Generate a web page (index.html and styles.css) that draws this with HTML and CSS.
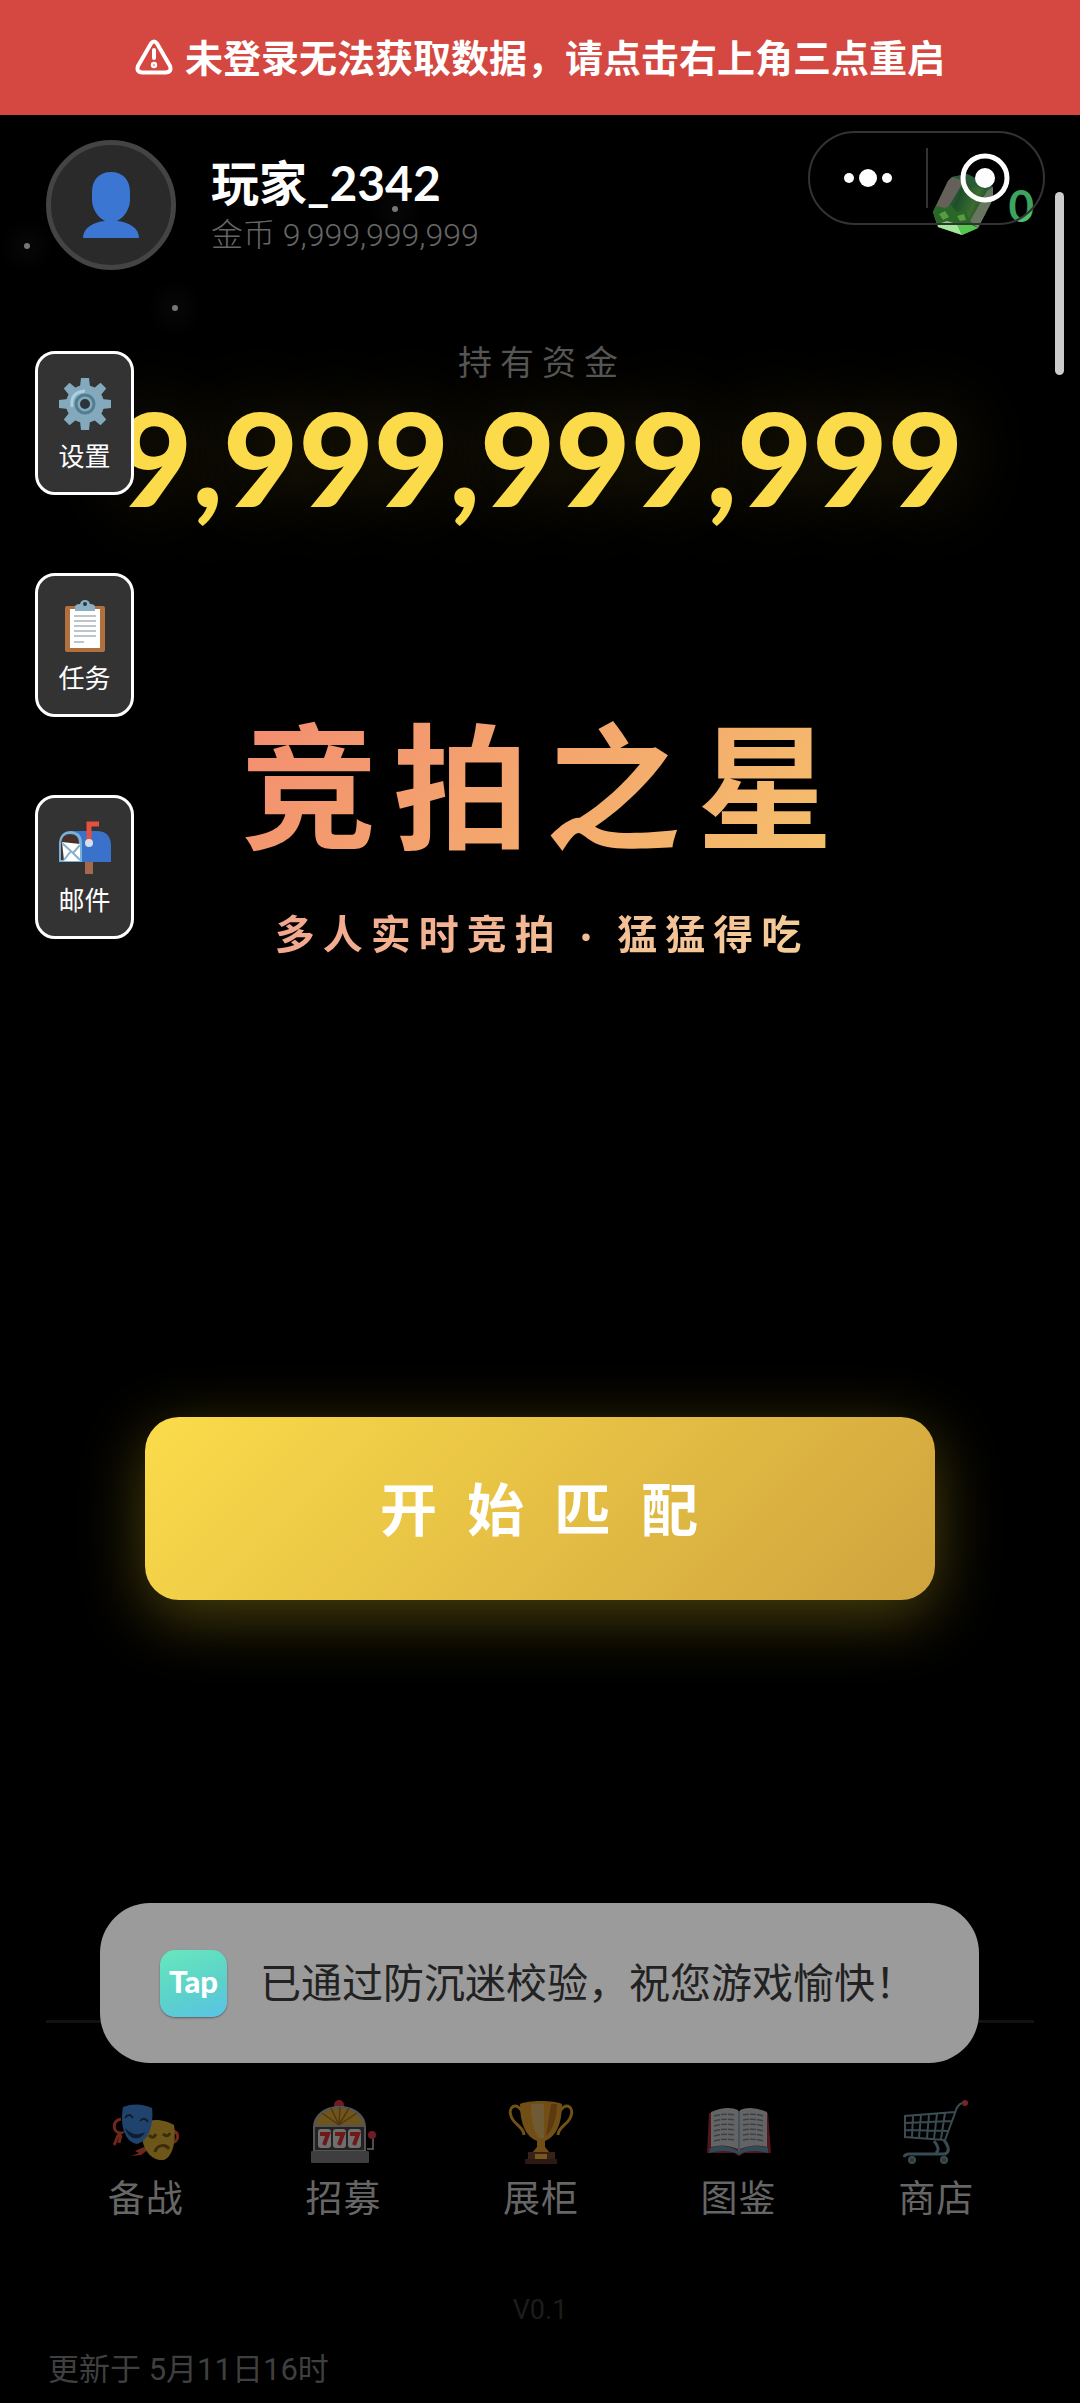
FILE: index.html
```html
<!DOCTYPE html>
<html lang="zh-CN">
<head>
    <meta charset="UTF-8">
    <meta name="viewport" content="width=device-width, initial-scale=1.0">
    <title>竞拍之星</title>
    <link rel="stylesheet" href="styles.css">
</head>
<body>
    <div class="page">
        <div class="banner" role="alert">
            <svg class="banner-icon" viewBox="0 0 38 36" fill="none" stroke="#fff" stroke-width="4" stroke-linejoin="round" stroke-linecap="round">
                <path d="M16 4.500 Q19 0.500 22 4.500 L35 27 Q37 33 31 33.500 H7 Q1 33 3 27 Z"/>
                <path d="M19 11 V19"/>
                <circle cx="19" cy="26" r="1.200"/>
            </svg>
            <span>未登录无法获取数据，请点击右上角三点重启</span>
        </div>

        <header class="header">
            <div class="avatar">
                <svg viewBox="0 0 56 66" fill="#3a76d2">
                    <path d="M28 0 C40 0 47 8 47 20 V28 C47 36 42 45 34 49 C46 50 56 56 56 66 H0 C0 56 10 50 22 49 C14 45 9 36 9 28 V20 C9 8 16 0 28 0 Z"/>
                </svg>
            </div>
            <div class="player">
                <div class="player-name">玩家_2342</div>
                <div class="player-coins">金币 9,999,999,999</div>
            </div>
            <div class="gems">
                <svg viewBox="0 0 62 62">
                    <defs>
                        <linearGradient id="gem" x1="0" y1="0" x2="1" y2="0.400">
                            <stop offset="0" stop-color="#6f7a6c"/>
                            <stop offset="0.450" stop-color="#235c31"/>
                            <stop offset="0.800" stop-color="#47803a"/>
                            <stop offset="1" stop-color="#2c5a35"/>
                        </linearGradient>
                    </defs>
                    <path d="M19 3 L34 0 L60 13 L60 25 L45 54 L29 61 L5 53 L0 38 L15 7 Z" fill="#3b7a3a"/>
                    <path d="M19 3 L34 0 L60 13 L54 17 L31 7 Z" fill="#2f6a45"/>
                    <path d="M19 3 L31 7 L10 42 L0 38 L15 7 Z" fill="#77716a"/>
                    <path d="M31 7 L54 17 L37 47 L10 42 Z" fill="url(#gem)"/>
                    <path d="M54 17 L60 13 L60 25 L45 54 L37 47 Z" fill="#7b8a70"/>
                    <path d="M0 38 L10 42 L12 51 L5 53 Z" fill="#63a04b"/>
                    <path d="M3 32 L12 34 L18 31 L24 38 L32 36 L37 47 L45 54 L29 61 L5 53 L0 38 Z" fill="#2f7a2c"/>
                    <path d="M5 50 L14 47 L24 50 L29 61 L5 53 Z" fill="#a5e59c"/>
                    <path d="M24 50 L34 49 L45 54 L29 61 Z" fill="#56c651"/>
                    <path d="M6 40 L12 37 L16 43 L10 46 Z M24 42 L31 40 L33 46 L27 47 Z" fill="#6cb552"/>
                </svg>
                <span>0</span>
            </div>
        </header>

        <main class="main">
            <div class="funds-label">持有资金</div>
            <div class="funds">9,999,999,999</div>
            <h1 class="title">竞拍之星</h1>
            <p class="slogan">多人实时竞拍 · 猛猛得吃</p>
            <button class="start" type="button">开始匹配</button>
        </main>

        <nav class="nav">
            <button type="button">
                <svg viewBox="0 0 66 66">
                    <g fill="none" stroke="#e0503a" stroke-width="3">
                        <path d="M8 20 C-2 22 0 34 8 34 C2 38 5 40 1 46 M8 36 L6 44 M60 32 C68 34 64 44 60 43"/>
                    </g>
                    <path d="M31 48 L22 52 L26 54 L18 57 L28 56 L36 50 Z" fill="#e0503a"/>
                    <path d="M30 24 C42 18 54 22 61 26 C64 44 58 60 50 61 C38 62 30 50 29 38 Z" fill="#d9ac32"/>
                    <path d="M10 8 C20 4 30 5 39 9 C41 24 36 42 24 45 C14 44 6 30 10 8 Z" fill="#3f86d8"/>
                    <path d="M12 29 C20 37 26 36 32 33 C28 42 16 42 12 29 Z" fill="#203a5e"/>
                    <g fill="none" stroke="#203a5e" stroke-width="2">
                        <path d="M12 19 Q16 13 20 19 M27 22 Q31 17 35 23"/>
                    </g>
                    <g fill="none" stroke="#7a5714" stroke-width="3">
                        <path d="M42 53 C44 45 53 45 56 50 M36 36 Q40 41 43 35 M50 35 Q55 39 57 34"/>
                    </g>
                </svg>
                <span>备战</span>
            </button>
            <button type="button">
                <svg viewBox="0 0 66 66">
                    <circle cx="29" cy="6" r="5" fill="#e03848"/>
                    <path d="M57 50 H63 V36" fill="none" stroke="#999" stroke-width="2"/>
                    <circle cx="62" cy="36" r="4" fill="#e03848"/>
                    <path d="M3 54 V28 C4 0 55 0 56 28 V54 Z" fill="#a8a8a8"/>
                    <path d="M6 26 C9 4 50 4 53 26 Z" fill="#d9a938"/>
                    <path d="M29 26 L12 14 M29 26 L21 9 M29 26 L30 8 M29 26 L39 9 M29 26 L47 14" stroke="#a86e20" stroke-width="1.500"/>
                    <rect x="5" y="28" width="49" height="23" fill="#444"/>
                    <rect x="8" y="30" width="13" height="19" rx="3" fill="#ddd"/>
                    <rect x="23" y="30" width="13" height="19" rx="3" fill="#ddd"/>
                    <rect x="38" y="30" width="13" height="19" rx="3" fill="#ddd"/>
                    <path d="M10 35 H18 L14 46 M25 35 H33 L29 46 M40 35 H48 L44 46" fill="none" stroke="#dc3030" stroke-width="4"/>
                    <rect x="1" y="52" width="58" height="12" rx="1" fill="#7c7c80"/>
                </svg>
                <span>招募</span>
            </button>
            <button type="button">
                <svg viewBox="0 0 66 66">
                    <g fill="none" stroke="#e2a32c" stroke-width="3">
                        <path d="M14 12 C7 2 0 9 3 17 C5 25 16 28 16 36 M52 12 C59 2 66 9 63 17 C61 25 50 28 50 36"/>
                    </g>
                    <path d="M12 5 C20 1 46 1 54 5 C54 25 48 38 37 42 V48 L42 54 H24 L29 48 V42 C18 38 12 25 12 5 Z" fill="#e29c2b"/>
                    <path d="M23 5 H36 V39 H31 C25 32 23 18 23 5 Z" fill="#dfb468"/>
                    <path d="M43 5 H49 C49 20 44 32 38 37 Z" fill="#b9731d"/>
                    <rect x="20" y="53" width="27" height="7" fill="#724335"/>
                    <rect x="17" y="60" width="32" height="5" fill="#5b352b"/>
                    <rect x="27" y="55" width="12" height="5" fill="#edb13b"/>
                </svg>
                <span>展柜</span>
            </button>
            <button type="button">
                <svg viewBox="0 0 66 66">
                    <path d="M3 14 H62 L65 54 H38 L33 57 L28 54 H1 Z" fill="#a82d3a"/>
                    <path d="M4 49 Q18 44 32 52 Q47 44 62 49 V54 Q46 50 36 54 L33 56 L30 54 Q18 50 3 54 Z" fill="#5b98ae"/>
                    <path d="M5 13 Q21 6 32 11 V50 Q18 44 5 48 Z" fill="#c4c8ca"/>
                    <path d="M61 13 Q45 6 34 11 V50 Q48 44 61 48 Z" fill="#c4c8ca"/>
                    <path d="M33 12 V52" stroke="#8ba8b3" stroke-width="2"/>
                    <g stroke="#7b7f81" stroke-width="1.500" stroke-dasharray="6 1">
                        <path d="M8 17 Q19 14 29 16 M8 22 Q19 19 29 21 M8 27 Q19 24 29 26 M8 32 Q19 29 29 31 M8 37 Q19 34 29 36 M8 42 Q19 39 29 41" fill="none"/>
                        <path d="M37 16 Q47 14 58 17 M37 21 Q47 19 58 22 M37 26 Q47 24 58 27 M37 31 Q47 29 58 32 M37 36 Q47 34 58 37 M37 41 Q47 39 58 42" fill="none"/>
                    </g>
                </svg>
                <span>图鉴</span>
            </button>
            <button type="button">
                <svg viewBox="0 0 66 66" fill="none" stroke="#7395a3" stroke-width="2">
                    <path d="M59 4 Q54 6 52 14 L42 41 L2 38 V17 L52 13 M2 24 L49 22 M2 31 L46 32 M10 17 L9 38 M18 16 L16 39 M26 16 L24 39 M34 15 L31 40 M42 14 L38 40"/>
                    <path d="M41 41 Q49 52 42 55 H6 Q2 55 1 58 M31 42 Q38 50 33 54" stroke-width="3"/>
                    <circle cx="9" cy="61" r="3" fill="#666"/>
                    <circle cx="41" cy="61" r="3" fill="#666"/>
                    <circle cx="62" cy="4" r="3" fill="#e34d55" stroke="none"/>
                </svg>
                <span>商店</span>
            </button>
        </nav>

        <footer class="footer">
            <div class="version">V0.1</div>
            <div class="updated">更新于 5月11日16时</div>
        </footer>

        <i class="spark spark-1"></i>
        <i class="spark spark-2"></i>
        <i class="spark spark-3"></i>

        <div class="capsule">
            <button type="button" aria-label="更多">
                <svg viewBox="0 0 50 18" width="50" height="18" fill="#fff">
                    <circle cx="6" cy="9" r="5"/>
                    <circle cx="25" cy="9" r="9"/>
                    <circle cx="44" cy="9" r="5"/>
                </svg>
            </button>
            <button type="button" aria-label="关闭">
                <svg viewBox="0 0 50 50" width="50" height="50">
                    <circle cx="25" cy="25" r="22" fill="none" stroke="#fff" stroke-width="5"/>
                    <circle cx="25" cy="25" r="10" fill="#fff"/>
                </svg>
            </button>
        </div>

        <div class="side">
            <button type="button">
                <svg viewBox="0 0 54 54">
                    <g fill="#84a9bd">
                        <circle cx="27" cy="27" r="19"/>
                        <path id="tooth" d="M22 10 L23 1 H31 L32 10 V44 L31 53 H23 L22 44 Z"/>
                        <use href="#tooth" transform="rotate(45 27 27)"/>
                        <use href="#tooth" transform="rotate(90 27 27)"/>
                        <use href="#tooth" transform="rotate(135 27 27)"/>
                    </g>
                    <circle cx="27" cy="27" r="9" fill="none" stroke="#527c90" stroke-width="3"/>
                    <path d="M14 30 Q12 15 27 14" fill="none" stroke="#acd0dd" stroke-width="3"/>
                    <circle cx="27" cy="27" r="5" fill="#2b3438"/>
                </svg>
                <span>设置</span>
            </button>
            <button type="button">
                <svg viewBox="0 0 54 54">
                    <rect x="7" y="7" width="40" height="46" rx="2" fill="#b1713f"/>
                    <path d="M12 10 H42 V49 H12 Z" fill="#fff"/>
                    <path d="M17 8 Q17 5 22 5 Q23 1 27 1 Q31 1 32 5 Q37 5 37 8 V12 H17 Z" fill="#8ab0c3"/>
                    <circle cx="27" cy="5" r="2" fill="#333"/>
                    <path d="M16 17 H38 M16 22 H38 M16 27 H38 M16 32 H38 M16 37 H38 M16 43 H26" stroke="#a9b3b9" stroke-width="1.500"/>
                </svg>
                <span>任务</span>
            </button>
            <button type="button">
                <svg viewBox="0 0 54 54">
                    <rect x="27" y="40" width="8" height="13" fill="#a4694d"/>
                    <path d="M13 10 H40 Q53 11 53 25 V41 H13 Z" fill="#3a72cb"/>
                    <path d="M1 41 V22 Q2 10 13 10 Q24 11 24 22 V41 Z" fill="#75b2da"/>
                    <path d="M3 39 V22 Q4 13 12 13 Q21 13 21 22 V39 Z" fill="#47302c"/>
                    <path d="M4 21 L22 23 V40 H6 Z" fill="#fff"/>
                    <path d="M4 22 L15 32 L22 24 M6 39 L13 30 M22 39 L15 32" stroke="#8ab0cd" stroke-width="2" fill="none"/>
                    <path d="M31 21 V3 H41" fill="none" stroke="#e6503f" stroke-width="5"/>
                    <circle cx="31" cy="22" r="4" fill="#d6e0e8"/>
                </svg>
                <span>邮件</span>
            </button>
        </div>

        <div class="toast" role="status">
            <span class="tap">Tap</span>
            <span>已通过防沉迷校验，祝您游戏愉快！</span>
        </div>

        <div class="scrollbar"></div>
    </div>
</body>
</html>
```
FILE: styles.css
```css
* {
    box-sizing: border-box;
}
body {
    margin: 0;
    background-color: #000;
    color: #fff;
    font-family: Lato, "Noto Sans CJK SC", sans-serif;
}
button {
    padding: 0;
    border: none;
    background: none;
    color: inherit;
    font-family: inherit;
    cursor: pointer;
}
.page {
    position: relative;
    display: flex;
    flex-direction: column;
    min-height: 100vh;
    overflow: hidden;
}

/* top banner */
.banner {
    display: flex;
    justify-content: center;
    align-items: center;
    gap: 12px;
    padding: 29px 0 30px;
    background-color: #d44841;
    font-size: 38px;
    line-height: 56px;
    font-weight: bold;
}
.banner-icon {
    width: 38px;
    height: 36px;
}

/* player info */
.header {
    display: flex;
    align-items: center;
    padding: 25px 46px 0;
}
.avatar {
    display: flex;
    justify-content: center;
    align-items: center;
    width: 130px;
    height: 130px;
    border: 5px solid #444;
    border-radius: 50%;
    background-color: #2a2a2a;
}
.avatar svg {
    width: 56px;
    height: 66px;
}
.player {
    flex: 1;
    margin-left: 35px;
}
.player-name {
    font-size: 48px;
    line-height: 60px;
    font-weight: bold;
}
.player-coins {
    color: #666;
    font-family: Roboto, "Noto Sans CJK SC", sans-serif;
    font-size: 32px;
    line-height: 44px;
    font-weight: 300;
}
.gems {
    display: flex;
    align-items: center;
    gap: 13px;
    color: #48c070;
    font-size: 44px;
    line-height: 60px;
    font-weight: bold;
}
.gems svg {
    width: 62px;
    height: 62px;
}

/* center */
.main {
    display: flex;
    flex-direction: column;
    align-items: center;
}
.funds-label {
    margin-top: 72px;
    padding-left: 4px;
    color: #555;
    font-size: 34px;
    line-height: 40px;
    letter-spacing: 8px;
}
.funds {
    color: #fbdb4a;
    font-size: 130px;
    line-height: 150px;
    font-weight: 900;
    text-shadow: 0 0 80px rgba(251, 219, 74, 0.2);
}
.title {
    margin: 175px 0 0;
    padding-left: 10px;
    background: linear-gradient(135deg, #f38b70, #f5c26b);
    -webkit-background-clip: text;
    background-clip: text;
    color: transparent;
    font-size: 136px;
    line-height: 160px;
    letter-spacing: 16px;
}
.slogan {
    margin: 37px 0 0;
    padding-left: 4px;
    background: linear-gradient(135deg, #f2a58e, #f5cf9a);
    -webkit-background-clip: text;
    background-clip: text;
    color: transparent;
    font-size: 40px;
    line-height: 60px;
    font-weight: bold;
    letter-spacing: 8px;
}
.start {
    width: calc(100% - 290px);
    margin: 453px 0 120px;
    padding: 52px 0 51px 28px;
    border-radius: 34px;
    background: linear-gradient(135deg, #fbdc4a, #cfa33e);
    box-shadow: 0 16px 64px rgba(251, 219, 40, 0.3);
    color: #fff;
    font-size: 57px;
    line-height: 80px;
    font-weight: bold;
    letter-spacing: 30px;
}

/* bottom nav */
.nav {
    display: flex;
    margin: auto 46px 0;
    padding-top: 76px;
    border-top: 3px solid #121212;
}
.nav button {
    flex: 1;
    display: flex;
    flex-direction: column;
    align-items: center;
    gap: 9px;
    padding-left: 2px;
    color: #666;
    font-size: 37px;
    line-height: 48px;
    letter-spacing: 1px;
}
.nav svg {
    width: 66px;
    height: 66px;
    opacity: 0.5;
}
.footer {
    padding: 68px 48px 13px;
    line-height: 40px;
}
.version {
    margin-bottom: 20px;
    color: #1c1c1c;
    font-family: Roboto, sans-serif;
    font-size: 27px;
    text-align: center;
}
.updated {
    color: #3f3f3f;
    font-family: Roboto, "Noto Sans CJK SC", sans-serif;
    font-size: 31px;
}

/* floating particles */
.spark {
    position: absolute;
    width: 6px;
    height: 6px;
    border-radius: 50%;
    background-color: #777;
    box-shadow: 0 0 24px 8px rgba(255, 255, 255, 0.07);
}
.spark-1 {
    left: 24px;
    top: 243px;
}
.spark-2 {
    left: 172px;
    top: 305px;
}
.spark-3 {
    left: 392px;
    top: 206px;
}

/* mini program capsule */
.capsule {
    position: absolute;
    top: 131px;
    right: 35px;
    display: flex;
    align-items: center;
    width: 237px;
    height: 94px;
    border: 2px solid #333;
    border-radius: 47px;
    background-color: rgba(0, 0, 0, 0.15);
}
.capsule button {
    flex: 1;
    display: flex;
    justify-content: center;
    align-items: center;
    height: 60px;
}
.capsule button + button {
    border-left: 2px solid #333;
}

/* left menu */
.side {
    position: absolute;
    top: 351px;
    left: 35px;
    display: flex;
    flex-direction: column;
    gap: 78px;
}
.side button {
    display: flex;
    flex-direction: column;
    align-items: center;
    gap: 7px;
    width: 99px;
    height: 144px;
    padding-top: 23px;
    border: 3px solid #fff;
    border-radius: 20px;
    background-color: #333;
    color: #fff;
    font-size: 26px;
    line-height: 36px;
}
.side svg {
    width: 54px;
    height: 54px;
}

.toast {
    position: absolute;
    right: 101px;
    bottom: 340px;
    left: 100px;
    display: flex;
    align-items: center;
    gap: 33px;
    height: 160px;
    padding-left: 60px;
    border-radius: 50px;
    background-color: #9b9b9b;
    color: #222;
    font-size: 41px;
    line-height: 56px;
    white-space: nowrap;
}
.tap {
    width: 67px;
    height: 67px;
    border-radius: 15px;
    background: linear-gradient(160deg, #66e8bd, #5cd0cc 60%, #58c4e8);
    box-shadow: 0 1px 2px rgba(0, 0, 0, 0.4);
    color: #fff;
    font-size: 31px;
    line-height: 62px;
    font-weight: 900;
    text-align: center;
}
.scrollbar {
    position: absolute;
    top: 192px;
    right: 16px;
    width: 9px;
    height: 183px;
    border-radius: 5px;
    background-color: #ccc;
}
```
